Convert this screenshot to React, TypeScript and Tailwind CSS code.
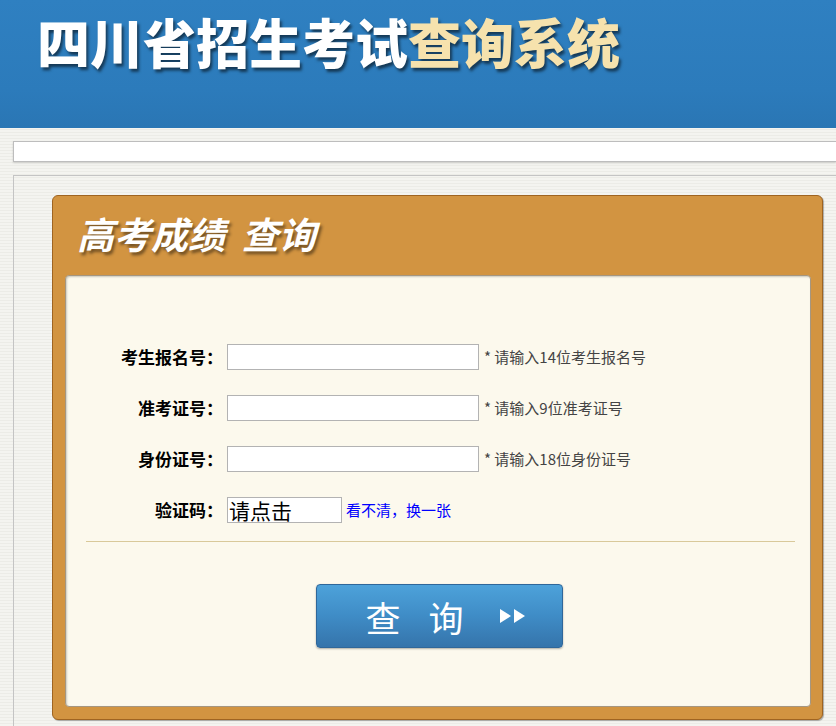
export default function App() {
    const rows = [
        { label: "考生报名号：", hint: "* 请输入14位考生报名号" },
        { label: "准考证号：", hint: "* 请输入9位准考证号" },
        { label: "身份证号：", hint: "* 请输入18位身份证号" },
    ];

    return (
        <div className="w-[836px] h-[726px] overflow-hidden bg-[repeating-linear-gradient(0deg,#f4f4f0_0px,#f4f4f0_2px,#ecece7_2px,#ecece7_3px)] font-['Noto_Sans_CJK_SC',sans-serif]">
            {/* Header banner */}
            <header className="h-[128px] bg-[linear-gradient(180deg,#2f80c1_0%,#2c7bbb_70%,#2a76b4_100%)] pl-[37px] pt-[1px]">
                <h1 className="text-[53px] leading-[80px] font-black text-white [text-shadow:2px_3px_3px_rgba(0,0,0,0.55)]">
                    四川省招生考试<span className="text-[#f6e2ad]">查询系统</span>
                </h1>
            </header>

            {/* Thin bar */}
            <div className="mt-[13px] ml-[13px] h-[21px] bg-white border border-r-0 border-[#bdbdbd] shadow-[0_1px_2px_rgba(0,0,0,0.15)]" />

            {/* Main panel */}
            <div className="mt-[13px] ml-[13px] h-[600px] border-t border-l border-[#c4c4c4] pt-[19px] pl-[38px]">
                <div className="w-[771px] h-[525px] rounded-[6px] bg-[#d29441] border border-[#9f6421] shadow-[1px_1px_1px_rgba(0,0,0,0.3)] flex flex-col">
                    <div className="h-[79px] pl-[24px] pt-[13px]">
                        <h2 className="text-[37px] leading-[48px] font-bold italic text-white [text-shadow:2px_3px_3px_rgba(0,0,0,0.45)]">
                            高考成绩&nbsp;&nbsp;查询
                        </h2>
                    </div>
                    <div className="ml-[12px] w-[746px] h-[432px] rounded-[4px] bg-[#fcf9ed] border border-[#a59680] shadow-[inset_1px_1px_2px_rgba(0,0,0,0.2)] flex flex-col">
                        <div className="pt-[68px] flex flex-col gap-[25px]">
                            {rows.map((r) => (
                                <div key={r.label} className="flex items-center h-[26px]">
                                    <label className="w-[157px] text-right text-[17px] font-bold text-black">{r.label}</label>
                                    <input
                                        type="text"
                                        className="ml-[4px] w-[252px] h-[26px] bg-white border border-[#b3b3b3] outline-none"
                                    />
                                    <span className="ml-[5px] text-[15px] text-[#444]">{r.hint}</span>
                                </div>
                            ))}
                            <div className="flex items-center h-[26px]">
                                <label className="w-[157px] text-right text-[17px] font-bold text-black">验证码：</label>
                                <div className="ml-[4px] w-[115px] h-[26px] bg-white border border-[#b3b3b3] text-[21px] leading-[24px] text-black pl-[1px]">
                                    请点击
                                </div>
                                <a className="ml-[4px] text-[15px] text-[#0000ff] cursor-pointer">看不清，换一张</a>
                            </div>
                        </div>

                        <div className="mt-[18px] ml-[20px] mr-[15px] h-px bg-[#d9c99a]" />

                        <div className="mt-[42px] flex justify-center pl-[2px]">
                            <button className="w-[247px] h-[64px] rounded-[4px] border border-[#2f679a] bg-[linear-gradient(180deg,#4da2da_0%,#3f8cc6_50%,#3574ab_100%)] shadow-[0_1px_2px_rgba(0,0,0,0.3)] flex items-center text-white">
                                <span className="ml-[49px] text-[35px] leading-none font-normal tracking-[28px]">查询</span>
                                <svg className="ml-[7px]" width="28" height="18" viewBox="0 0 28 18">
                                    <polygon points="1,2 12,9 1,16" fill="white" />
                                    <polygon points="15,2 26,9 15,16" fill="white" />
                                </svg>
                            </button>
                        </div>
                    </div>
                </div>
            </div>
        </div>
    );
}
